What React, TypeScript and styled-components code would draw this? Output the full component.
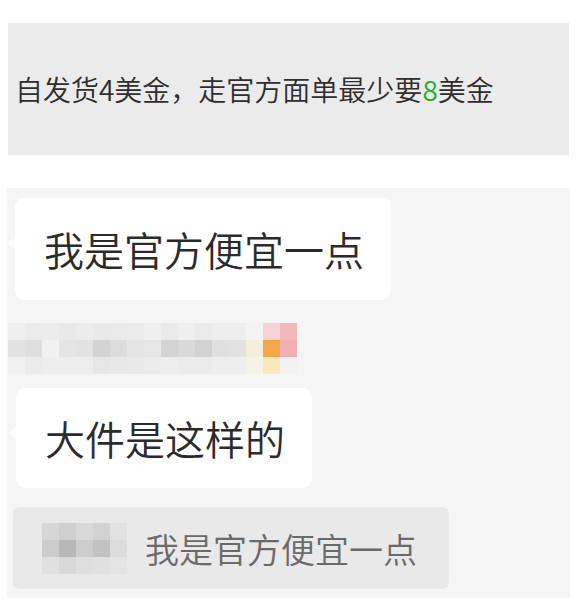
import React from "react";
import styled, { createGlobalStyle } from "styled-components";

const Global = createGlobalStyle`
  html, body { margin: 0; padding: 0; background: #ffffff; }
  body { font-family: "Noto Sans CJK SC", "Noto Sans", sans-serif; font-weight: 350; }
`;

const Page = styled.div`
  width: 577px;
  height: 611px;
  display: flex;
  flex-direction: column;
  overflow: hidden;
`;

const NoticeBar = styled.div`
  margin: 23px 0 0 8px;
  width: 561px;
  height: 132px;
  background: #ebebeb;
  display: flex;
  align-items: center;
  padding: 0 0 0 7px;
  box-sizing: border-box;
  font-size: 28px;
  color: #2e2e2e;
  white-space: nowrap;
`;

const Green = styled.span`
  color: #22ad2a;
`;

const ChatPanel = styled.div`
  margin: 33px 0 0 7px;
  width: 563px;
  height: 410px;
  background: #f5f5f5;
  display: flex;
  flex-direction: column;
  align-items: flex-start;
`;

const Bubble = styled.div<{ $w: number; $h: number; $mt: number; $ml: number }>`
  position: relative;
  margin: ${(p) => p.$mt}px 0 0 ${(p) => p.$ml}px;
  width: ${(p) => p.$w}px;
  height: ${(p) => p.$h}px;
  background: #ffffff;
  border-radius: 9px;
  box-sizing: border-box;
  padding-left: 29px;
  display: flex;
  align-items: center;
  font-size: 40px;
  color: #2b2b2b;
  white-space: nowrap;

  &::before {
    content: "";
    position: absolute;
    left: -7px;
    top: 38px;
    border-style: solid;
    border-width: 7px 7px 7px 0;
    border-color: transparent #fbfbfb transparent transparent;
  }
`;

const Mosaic = styled.div<{ $cols: number; $mt: number; $ml: number }>`
  margin: ${(p) => p.$mt}px 0 0 ${(p) => p.$ml}px;
  display: grid;
  grid-template-columns: repeat(${(p) => p.$cols}, 17px);
  grid-auto-rows: 17px;
  filter: blur(0.6px);
  flex-shrink: 0;
`;

const Cell = styled.div<{ $c: string }>`
  background: ${(p) => p.$c};
`;

const Quote = styled.div`
  margin: 19px 0 0 6px;
  width: 436px;
  height: 82px;
  background: #e9e9e9;
  border-radius: 7px;
  display: flex;
  align-items: center;
  padding-left: 29px;
  box-sizing: border-box;
`;

const QuoteText = styled.span`
  margin-left: 18px;
  font-size: 34px;
  color: #6a6a6a;
  white-space: nowrap;
`;

const nameMosaic = [
  "#efefef", "#ebebeb", "#ececec", "#e9e9e9", "#ececec", "#e9e9e9", "#eaeaea", "#ebebeb", "#efefef", "#eaeaea", "#efefef", "#ebebeb", "#eeeeee", "#eeeeee", "#f3f3f3", "#f5d3d7", "#f3b8be",
  "#e2e2e2", "#dedede", "#f1f1f1", "#e5e5e5", "#e2e2e2", "#d3d3d3", "#dcdcdc", "#e4e4e4", "#e6e6e6", "#d4d4d4", "#d9d9d9", "#d2d2d2", "#e0e0e0", "#e2e2e2", "#f4eedc", "#f8a64a", "#f1afb4",
  "#f1f1f1", "#ebebeb", "#ededed", "#ededed", "#ededed", "#e6e6e6", "#e8e8e8", "#e9e9e9", "#ececec", "#ededed", "#ebebeb", "#ebebeb", "#eeeeee", "#eeeeee", "#f5f2e6", "#f8e8bd", "#f2f2f2",
];

const quoteMosaic = [
  "#d6d6d6", "#cfcfcf", "#d8d8d8", "#d2d2d2", "#e2e2e2",
  "#cccccc", "#b8b8b8", "#cdcdcd", "#c2c2c2", "#dcdcdc",
  "#e0e0e0", "#d8d8d8", "#dedede", "#e0e0e0", "#e4e4e4",
];

export default function App() {
  return (
    <Page>
      <Global />
      <NoticeBar>
        自发货4美金，走官方面单最少要<Green>8</Green>美金
      </NoticeBar>
      <ChatPanel>
        <Bubble $w={376} $h={102} $mt={10} $ml={8}>我是官方便宜一点</Bubble>
        <Mosaic $cols={17} $mt={23} $ml={1}>
          {nameMosaic.map((c, i) => (
            <Cell key={i} $c={c} />
          ))}
        </Mosaic>
        <Bubble $w={296} $h={100} $mt={14} $ml={9}>大件是这样的</Bubble>
        <Quote>
          <Mosaic $cols={5} $mt={0} $ml={0}>
            {quoteMosaic.map((c, i) => (
              <Cell key={i} $c={c} />
            ))}
          </Mosaic>
          <QuoteText>我是官方便宜一点</QuoteText>
        </Quote>
      </ChatPanel>
    </Page>
  );
}
